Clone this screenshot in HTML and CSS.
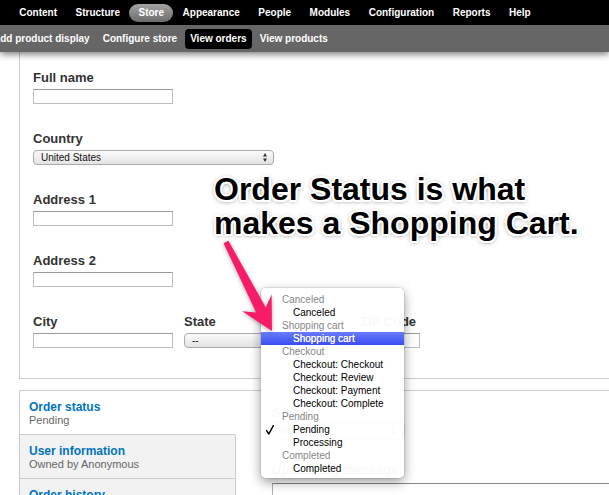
FILE: index.html
```html
<!DOCTYPE html>
<html>
<head>
<meta charset="utf-8">
<link rel="stylesheet" href="styles.css">
</head>
<body>
<header class="toolbar">
  <nav class="menu">
    <a>Content</a><a>Structure</a><a class="active">Store</a><a>Appearance</a><a>People</a><a>Modules</a><a>Configuration</a><a>Reports</a><a>Help</a>
  </nav>
  <nav class="shortcuts">
    <a class="first">Add product display</a><a>Configure store</a><a class="active">View orders</a><a>View products</a>
  </nav>
</header>
<main class="page">
  <section class="fieldset">
    <div class="field"><label>Full name</label><div class="input w140"></div></div>
    <div class="field"><label>Country</label><div class="select country"><span>United States</span><svg class="arrows" width="4" height="9" viewBox="0 0 4 9"><polygon points="0,3.5 2,0 4,3.5"/><polygon points="0,5.5 4,5.5 2,9"/></svg></div></div>
    <div class="field"><label>Address 1</label><div class="input w140"></div></div>
    <div class="field"><label>Address 2</label><div class="input w140"></div></div>
    <div class="field-row">
      <div class="field"><label>City</label><div class="input w140"></div></div>
      <div class="field"><label>State</label><div class="select state"><span>--</span><svg class="arrows" width="4" height="9" viewBox="0 0 4 9"><polygon points="0,3.5 2,0 4,3.5"/><polygon points="0,5.5 4,5.5 2,9"/></svg></div></div>
      <div class="field"><label>ZIP Code</label><div class="input w60"></div></div>
    </div>
  </section>
  <section class="vtabs">
    <ul class="tabs">
      <li class="tab active"><strong>Order status</strong><span>Pending</span></li>
      <li class="tab"><strong>User information</strong><span>Owned by Anonymous</span></li>
      <li class="tab"><strong>Order history</strong><span>Revision</span></li>
    </ul>
    <div class="pane">
      <label>Status</label>
      <div class="select status"><span>Pending</span><svg class="arrows" width="4" height="9" viewBox="0 0 4 9"><polygon points="0,3.5 2,0 4,3.5"/><polygon points="0,5.5 4,5.5 2,9"/></svg></div>
      <label class="log">Update log message</label>
      <div class="textarea"></div>
    </div>
  </section>
</main>

<div class="popup">
  <div class="grp">Canceled</div>
  <div class="opt">Canceled</div>
  <div class="grp">Shopping cart</div>
  <div class="opt hl">Shopping cart</div>
  <div class="grp">Checkout</div>
  <div class="opt">Checkout: Checkout</div>
  <div class="opt">Checkout: Review</div>
  <div class="opt">Checkout: Payment</div>
  <div class="opt">Checkout: Complete</div>
  <div class="grp">Pending</div>
  <div class="opt"><svg class="check" width="8" height="10" viewBox="0 0 8 10"><path d="M0.6 5.6 L2.8 9 L7.4 0.6" fill="none" stroke="#000" stroke-width="1.5" stroke-linecap="round" stroke-linejoin="round"/></svg>Pending</div>
  <div class="opt">Processing</div>
  <div class="grp">Completed</div>
  <div class="opt">Completed</div>
</div>

<div class="callout">Order Status is what<br>makes a Shopping Cart.</div>

<svg class="arrow" width="609" height="495" viewBox="0 0 609 495">
  <polygon points="228.4,240.8 265.8,307.4 271.6,294.5 272,331 242.2,311.2 256.2,312.5 223.6,243.2"/>
</svg>
</body>
</html>
```

FILE: styles.css
```css
html, body {
  margin: 0;
  padding: 0;
}
body {
  width: 609px;
  height: 495px;
  overflow: hidden;
  position: relative;
  background: #fff;
  font-family: "Liberation Sans", Arial, sans-serif;
}

/* Toolbar */
.toolbar {
  position: relative;
  z-index: 2;
  box-shadow: 0 2px 7px rgba(0, 0, 0, 0.55);
}
.menu {
  display: flex;
  align-items: center;
  height: 25px;
  background: #000;
  padding-left: 10px;
}
.menu a {
  padding: 0 9.25px;
  height: 18px;
  line-height: 18px;
  color: #fff;
  font-weight: bold;
  font-size: 10px;
  border-radius: 9px;
  white-space: nowrap;
}
.menu a.active {
  background: linear-gradient(#a3a3a3, #6c6c6c);
}
.shortcuts {
  display: flex;
  align-items: center;
  gap: 3px;
  height: 27px;
  background: #666;
}
.shortcuts a {
  padding: 0 5px;
  height: 20px;
  line-height: 20px;
  color: #fff;
  font-weight: bold;
  font-size: 10px;
  border-radius: 4px;
  white-space: nowrap;
}
.shortcuts a.first {
  margin-left: -12px;
}
.shortcuts a.active {
  background: #000;
}

/* Page */
.page {
  width: 800px;
  padding-left: 19px;
}
.fieldset {
  border: 1px solid #ccc;
  border-top: none;
  padding: 18px 13px 30px;
}
.field {
  margin-bottom: 27px;
}
.field label,
.pane label {
  display: block;
  font-weight: bold;
  font-size: 13px;
  line-height: 16px;
  color: #333;
  margin-bottom: 3px;
}
.field-row {
  display: flex;
  gap: 11px;
}
.field-row .field {
  margin-bottom: 0;
}
.input {
  box-sizing: border-box;
  height: 15px;
  border: 1px solid #bdbdbd;
  border-top-color: #9a9a9a;
  background: #fff;
}
.w140 { width: 140px; }
.w60 { width: 60px; }

.select {
  box-sizing: border-box;
  height: 15px;
  border: 1px solid #aaa;
  border-radius: 4px;
  background: linear-gradient(#fbfbfb, #e3e3e3);
  display: flex;
  align-items: center;
  justify-content: space-between;
  padding: 0 6px 0 7px;
  font-size: 10px;
  color: #111;
}
.arrows {
  fill: #333;
}
.country { width: 241px; }
.state { width: 165px; }

/* Vertical tabs */
.vtabs {
  margin-top: 11px;
  border: 1px solid #ccc;
  display: flex;
  height: 200px;
}
.tabs {
  list-style: none;
  margin: 0;
  padding: 0;
  width: 216px;
  flex: none;
}
.tab {
  box-sizing: border-box;
  height: 44px;
  padding: 9px 9px 0;
  border-bottom: 1px solid #ccc;
  border-right: 1px solid #ccc;
  background: #f2f2f2;
}
.tab.active {
  background: #fff;
  border-right-color: #fff;
}
.tab strong {
  display: block;
  color: #0074bd;
  font-size: 12px;
  line-height: 14px;
}
.tab span {
  display: block;
  color: #666;
  font-size: 11px;
  line-height: 13px;
}
.pane {
  padding: 14px 0 0 36px;
}
.pane label {
  margin-bottom: 1px;
}
.status {
  width: 131px;
  height: 17px;
  border-color: #7ea6e0;
  box-shadow: 0 0 2px 1px rgba(110, 160, 230, 0.7);
}
.pane label.log {
  margin-top: 23px;
  margin-bottom: 5px;
}
.textarea {
  width: 400px;
  height: 60px;
  border: 1px solid #b0b0b0;
  border-top-color: #888;
}

/* Popup menu */
.popup {
  position: absolute;
  left: 261px;
  top: 288px;
  width: 143px;
  padding: 5px 0 3px;
  background: rgba(255, 255, 255, 0.968);
  border-radius: 5px;
  box-shadow: 0 0 0 1px rgba(0, 0, 0, 0.08), 0 4px 12px rgba(0, 0, 0, 0.4);
  z-index: 3;
  font-size: 10px;
}
.grp,
.opt {
  height: 13px;
  line-height: 13px;
  white-space: nowrap;
}
.grp {
  padding-left: 21px;
  color: #868686;
}
.opt {
  position: relative;
  padding-left: 32px;
  color: #000;
}
.opt.hl {
  background: linear-gradient(#6a7cf8, #3a4df5);
  color: #fff;
  text-shadow: 0 0 0.4px #fff;
}
.check {
  position: absolute;
  left: 5px;
  top: 2px;
}

/* Annotation */
.callout {
  position: absolute;
  left: 214px;
  top: 172px;
  z-index: 4;
  font-family: "Liberation Sans", Arial, sans-serif;
  font-weight: bold;
  font-size: 32px;
  line-height: 34px;
  color: #000;
  white-space: nowrap;
  text-shadow:
    2px 0 0 #fff, -2px 0 0 #fff, 0 2px 0 #fff, 0 -2px 0 #fff,
    1.5px 1.5px 0 #fff, -1.5px 1.5px 0 #fff, 1.5px -1.5px 0 #fff, -1.5px -1.5px 0 #fff,
    0 1px 5px rgba(0, 0, 0, 0.7);
}
.arrow {
  position: absolute;
  left: 0;
  top: 0;
  z-index: 5;
  pointer-events: none;
  fill: #f81b6a;
  filter: drop-shadow(0 1px 2px rgba(0, 0, 0, 0.35));
}
```
